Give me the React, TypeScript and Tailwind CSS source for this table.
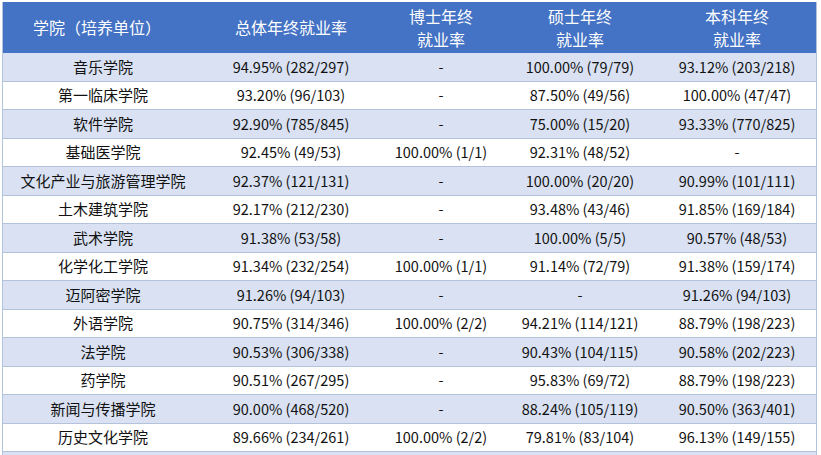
import React from 'react';

const rows = [
  ['音乐学院', '94.95% (282/297)', '-', '100.00% (79/79)', '93.12% (203/218)'],
  ['第一临床学院', '93.20% (96/103)', '-', '87.50% (49/56)', '100.00% (47/47)'],
  ['软件学院', '92.90% (785/845)', '-', '75.00% (15/20)', '93.33% (770/825)'],
  ['基础医学院', '92.45% (49/53)', '100.00% (1/1)', '92.31% (48/52)', '-'],
  ['文化产业与旅游管理学院', '92.37% (121/131)', '-', '100.00% (20/20)', '90.99% (101/111)'],
  ['土木建筑学院', '92.17% (212/230)', '-', '93.48% (43/46)', '91.85% (169/184)'],
  ['武术学院', '91.38% (53/58)', '-', '100.00% (5/5)', '90.57% (48/53)'],
  ['化学化工学院', '91.34% (232/254)', '100.00% (1/1)', '91.14% (72/79)', '91.38% (159/174)'],
  ['迈阿密学院', '91.26% (94/103)', '-', '-', '91.26% (94/103)'],
  ['外语学院', '90.75% (314/346)', '100.00% (2/2)', '94.21% (114/121)', '88.79% (198/223)'],
  ['法学院', '90.53% (306/338)', '-', '90.43% (104/115)', '90.58% (202/223)'],
  ['药学院', '90.51% (267/295)', '-', '95.83% (69/72)', '88.79% (198/223)'],
  ['新闻与传播学院', '90.00% (468/520)', '-', '88.24% (105/119)', '90.50% (363/401)'],
  ['历史文化学院', '89.66% (234/261)', '100.00% (2/2)', '79.81% (83/104)', '96.13% (149/155)'],
  ['', '', '', '', ''],
];

const cols = 'grid grid-cols-[200px_176px_124px_154px_160px]';

export default function App() {
  return (
    <div className="w-[821px] h-[455px] overflow-hidden bg-white pt-[2px] pl-[2px] font-['Noto_Sans_CJK_SC',sans-serif]">
      <div className="w-[815px] border-x border-[#b4c3dc]">
        {/* Header */}
        <div className={`${cols} h-[51px] bg-[#4472c4] text-white text-[16px] leading-[23px]`}>
          <div className="flex items-center justify-center pr-[12px]">学院（培养单位）</div>
          <div className="flex items-center justify-center">总体年终就业率</div>
          <div className="flex flex-col items-center justify-center">
            <span>博士年终</span>
            <span>就业率</span>
          </div>
          <div className="flex flex-col items-center justify-center">
            <span>硕士年终</span>
            <span>就业率</span>
          </div>
          <div className="flex flex-col items-center justify-center">
            <span>本科年终</span>
            <span>就业率</span>
          </div>
        </div>

        {rows.map((r, i) => (
          <div
            key={i}
            className={`${cols} h-[28.5px] border-b border-[#b4c3dc] text-[#111] ${i % 2 === 0 ? 'bg-[#d9e1f2]' : 'bg-white'}`}
          >
            {r.map((c, j) => (
              <div
                key={j}
                className={`flex items-center justify-center whitespace-nowrap ${j === 0 ? 'text-[15px]' : 'text-[14.5px]'}`}
              >
                {c}
              </div>
            ))}
          </div>
        ))}
      </div>
    </div>
  );
}
